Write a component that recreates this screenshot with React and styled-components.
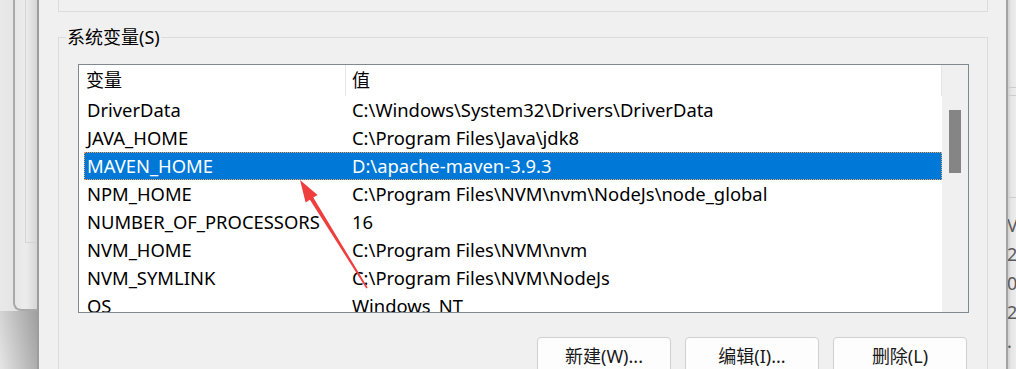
import React from "react";
import styled, { createGlobalStyle } from "styled-components";

const Global = createGlobalStyle`
  html, body { margin: 0; padding: 0; }
  body {
    width: 1016px;
    height: 369px;
    overflow: hidden;
    background: #e4e4e4;
    font-family: "Noto Sans", "Noto Sans CJK SC", sans-serif;
  }
  #root { width: 1016px; height: 369px; }
`;

const Page = styled.div`
  position: relative;
  display: flex;
  width: 1016px;
  height: 369px;
  overflow: hidden;
  font-size: 18px;
  color: #000;
`;

/* ---------- window behind, left ---------- */
const LeftStrip = styled.div`
  width: 37px;
  flex: none;
  display: flex;
  flex-direction: column;
  background: linear-gradient(90deg, #e9e9e9 0%, #dedede 100%);
`;

const BackWindow = styled.div`
  margin-left: 13px;
  height: 311px;
  box-sizing: border-box;
  border-left: 2px solid #a9a9a9;
  border-bottom: 2px solid #a9a9a9;
  border-bottom-left-radius: 8px;
  background: linear-gradient(90deg, #e6e6e6 0%, #ececec 50%, #d6d6d6 100%);
`;

const BackInner = styled.div`
  margin-left: 10px;
  height: 243px;
  box-sizing: border-box;
  border-left: 1px solid #d4d4d4;
  border-bottom: 1px solid #d4d4d4;
`;

const LeftShadow = styled.div`
  flex: 1;
  background:
    linear-gradient(180deg, rgba(0, 0, 0, 0.08) 0%, rgba(0, 0, 0, 0) 100%),
    linear-gradient(90deg, #e6e6e6 0%, #cccccc 45%, #adadad 100%);
`;

/* ---------- main dialog ---------- */
const Dialog = styled.div`
  width: 971px;
  flex: none;
  box-sizing: border-box;
  height: 369px;
  background: #f0f0f0;
  border-left: 2px solid #9d9d9d;
  border-right: 2px solid #a3a3a3;
  padding: 0 18px 0 19px;
  display: flex;
  flex-direction: column;
`;

const TopGroup = styled.div`
  height: 12px;
  flex: none;
  box-sizing: border-box;
  border: 1px solid #dcdcdc;
  border-top: none;
  margin-bottom: 25px;
`;

const Group = styled.div`
  position: relative;
  flex: 1;
  border: 1px solid #dcdcdc;
  border-bottom: none;
  padding: 26px 18px 0 19px;
  display: flex;
  flex-direction: column;
`;

const GroupLabel = styled.span`
  position: absolute;
  top: -13px;
  left: 7px;
  padding: 0 1px;
  line-height: 24px;
  background: #f0f0f0;
  font-size: 18px;
`;

const ListView = styled.div`
  height: 249px;
  box-sizing: border-box;
  border: 1px solid #838790;
  background: #fff;
  display: flex;
  overflow: hidden;
`;

const ListMain = styled.div`
  flex: 1;
  display: flex;
  flex-direction: column;
  overflow: hidden;
`;

const Header = styled.div`
  height: 31px;
  flex: none;
  display: flex;
`;

const HeadCell = styled.div`
  box-sizing: border-box;
  height: 31px;
  line-height: 31px;
  border-right: 1px solid #e5e5e5;
  padding-left: ${(p) => p.$pad}px;
  width: ${(p) => (p.$w ? `${p.$w}px` : "auto")};
  flex: ${(p) => (p.$w ? "none" : "1")};
  white-space: nowrap;
`;

const Row = styled.div`
  height: 28px;
  flex: none;
  box-sizing: border-box;
  margin-left: 5px;
  padding-left: 2px;
  display: grid;
  grid-template-columns: 265px 1fr;
  align-items: center;
  font-size: 18.4px;
  line-height: 26px;
  white-space: nowrap;
  border: 1px solid transparent;
  outline: ${(p) => (p.$selected ? "1px dotted #e9a25a" : "none")};
  outline-offset: -1px;
  background: ${(p) => (p.$selected ? "#0078d7" : "transparent")};
  color: ${(p) => (p.$selected ? "#fff" : "#000")};
`;

const Cell = styled.span`
  overflow: visible;
`;

const ScrollBar = styled.div`
  width: 26px;
  flex: none;
  background: #f0f0f0;
  padding-top: 45px;
  padding-left: 7px;
  box-sizing: border-box;
`;

const Thumb = styled.div`
  width: 12px;
  height: 63px;
  background: #858585;
`;

const ButtonRow = styled.div`
  margin-top: 24px;
  padding-right: 2px;
  display: flex;
  justify-content: flex-end;
  gap: 14px;
`;

const Button = styled.button`
  width: 134px;
  height: 38px;
  box-sizing: border-box;
  background: #fdfdfd;
  border: 1px solid #d0d0d0;
  border-radius: 4px;
  font-family: "Noto Sans", "Noto Sans CJK SC", sans-serif;
  font-size: 18px;
  color: #1a1a1a;
  padding: 0;
  line-height: 36px;
`;

/* ---------- window behind, right ---------- */
const RightStrip = styled.div`
  flex: 1;
  display: flex;
  flex-direction: column;
  background: linear-gradient(90deg, #cfcfcf 0%, #e6e6e6 40%, #ececec 100%);
  overflow: hidden;
`;

const StripGap = styled.div`
  height: ${(p) => p.$h}px;
  flex: none;
  border-bottom: ${(p) => (p.$line ? "1px solid #cdcdcd" : "none")};
`;

const StripText = styled.div`
  margin-left: -1px;
  display: flex;
  flex-direction: column;
  font-size: 18px;
  line-height: 29px;
  color: #5a5a5a;
  white-space: nowrap;
`;

const ArrowSvg = styled.svg`
  position: absolute;
  left: 0;
  top: 0;
  pointer-events: none;
`;

const rows = [
  ["DriverData", "C:\\Windows\\System32\\Drivers\\DriverData"],
  ["JAVA_HOME", "C:\\Program Files\\Java\\jdk8"],
  ["MAVEN_HOME", "D:\\apache-maven-3.9.3"],
  ["NPM_HOME", "C:\\Program Files\\NVM\\nvm\\NodeJs\\node_global"],
  ["NUMBER_OF_PROCESSORS", "16"],
  ["NVM_HOME", "C:\\Program Files\\NVM\\nvm"],
  ["NVM_SYMLINK", "C:\\Program Files\\NVM\\NodeJs"],
  ["OS", "Windows_NT"],
];

export default function App() {
  return (
    <>
      <Global />
      <Page>
        <LeftStrip>
          <BackWindow>
            <BackInner />
          </BackWindow>
          <LeftShadow />
        </LeftStrip>

        <Dialog>
          <TopGroup />
          <Group>
            <GroupLabel>系统变量(S)</GroupLabel>
            <ListView>
              <ListMain>
                <Header>
                  <HeadCell $w={267} $pad={7}>变量</HeadCell>
                  <HeadCell $pad={6}>值</HeadCell>
                </Header>
                {rows.map(([k, v]) => (
                  <Row key={k} $selected={k === "MAVEN_HOME"}>
                    <Cell>{k}</Cell>
                    <Cell>{v}</Cell>
                  </Row>
                ))}
              </ListMain>
              <ScrollBar>
                <Thumb />
              </ScrollBar>
            </ListView>
            <ButtonRow>
              <Button>新建(W)...</Button>
              <Button>编辑(I)...</Button>
              <Button>删除(L)</Button>
            </ButtonRow>
          </Group>
        </Dialog>

        <RightStrip>
          <StripGap $h={87} $line />
          <StripGap $h={7} $line />
          <StripGap $h={101} $line />
          <StripGap $h={13} />
          <StripText>
            <span>V</span>
            <span>2</span>
            <span>0</span>
            <span>2</span>
            <span>.</span>
          </StripText>
        </RightStrip>

        <ArrowSvg width="1016" height="369" viewBox="0 0 1016 369">
          <polygon
            points="300,180 317.6,195 313.3,197.6 367.7,287.6 366.3,288.4 309.9,199.8 305.6,202.4"
            fill="#ef3e3e"
          />
        </ArrowSvg>
      </Page>
    </>
  );
}
